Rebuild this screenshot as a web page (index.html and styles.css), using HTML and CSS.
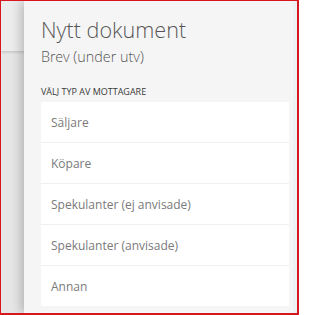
FILE: index.html
```html
<!DOCTYPE html>
<html lang="sv">
<head>
<meta charset="utf-8">
<title>Nytt dokument</title>
<link rel="stylesheet" href="styles.css">
</head>
<body>
<div class="frame">
  <div class="appbar"></div>
  <aside class="drawer">
    <div class="drawer-content">
      <h1 class="title">Nytt dokument</h1>
      <p class="subtitle">Brev (under utv)</p>
      <h2 class="section-label">Välj typ av mottagare</h2>
      <ul class="options">
        <li class="option">Säljare</li>
        <li class="option">Köpare</li>
        <li class="option">Spekulanter (ej anvisade)</li>
        <li class="option">Spekulanter (anvisade)</li>
        <li class="option">Annan</li>
      </ul>
    </div>
    <div class="scrollbar"></div>
  </aside>
</div>
</body>
</html>
```
FILE: styles.css
```css
html, body {
  margin: 0;
  padding: 0;
  width: 299px;
  height: 315px;
  overflow: hidden;
  font-family: "Open Sans", "Noto Sans", "Liberation Sans", sans-serif;
}

.frame {
  position: relative;
  box-sizing: border-box;
  width: 299px;
  height: 315px;
  border-style: solid;
  border-color: #d8161f;
  border-width: 1px 2px 2px 1px;
  background: #e6e6e6;
  overflow: hidden;
}

.appbar {
  height: 50px;
  background: #ececec;
  box-shadow: 0 1px 3px rgba(0, 0, 0, 0.18);
}

.drawer {
  position: absolute;
  top: 0;
  left: 23px;
  right: 0;
  bottom: 0;
  display: flex;
  background: #f5f5f5;
  box-shadow: -3px 0 10px rgba(0, 0, 0, 0.22);
}

.drawer-content {
  flex: 1;
  padding: 14px 4px 0 17px;
}

.scrollbar {
  width: 4px;
  background: #eef1f4;
}

.title {
  margin: 0;
  font-family: "Open Sans Light", "Open Sans", "Noto Sans", sans-serif;
  font-size: 21.6px;
  line-height: 29px;
  font-weight: 300;
  color: #555;
}

.subtitle {
  margin: 3px 0 0;
  font-family: "Open Sans Light", "Open Sans", "Noto Sans", sans-serif;
  font-size: 14.4px;
  line-height: 20px;
  font-weight: 300;
  color: #555;
}

.section-label {
  margin: 19px 0 0;
  font-size: 9px;
  line-height: 12px;
  font-weight: 400;
  text-transform: uppercase;
  color: #3a3a3a;
}

.options {
  list-style: none;
  margin: 4px 0 0;
  padding: 0;
  background: #fff;
}

.option {
  height: 40px;
  display: flex;
  align-items: center;
  padding-left: 10px;
  font-size: 12px;
  color: #7a7a7a;
}

.option + .option {
  border-top: 1px solid #efefef;
}
```
